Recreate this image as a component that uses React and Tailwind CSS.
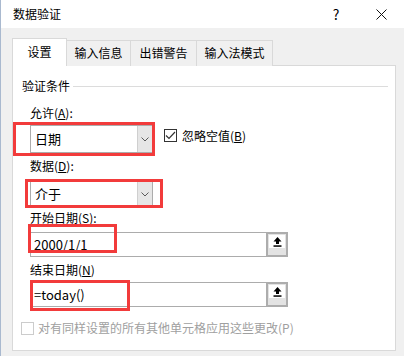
const FONT = "font-['Noto_Sans_CJK_SC','Noto_Sans',sans-serif]";

function Chevron() {
  return (
    <svg width="8" height="5" viewBox="0 0 8 5" fill="none" aria-hidden="true">
      <path d="M0.5 0.5 L4 4 L7.5 0.5" stroke="#5a5a5a" strokeWidth="1" />
    </svg>
  );
}

function Select({ value, children }) {
  return (
    <div className="relative flex h-[28px] w-[123px] border border-[#acacac] bg-white">
      <div className="flex flex-1 items-center pl-[4px] text-[13px]">{value}</div>
      <div className="flex w-[15px] items-center justify-center border-l border-[#cfcfcf] bg-[#e6e6e6]">
        <Chevron />
      </div>
      {children}
    </div>
  );
}

function RefButton() {
  return (
    <div className="flex h-[25px] w-[22px] flex-col border-2 border-[#adadad] bg-[#e3e3e3] p-px">
      <div className="flex h-[13px] items-center justify-center bg-white">
        <svg width="9" height="10" viewBox="0 0 9 10" aria-hidden="true">
          <path d="M4.5 0 L8.5 4.5 L6 4.5 L6 7 L3 7 L3 4.5 L0.5 4.5 Z" fill="#000" />
          <rect x="0.5" y="8.3" width="8" height="1.5" fill="#000" />
        </svg>
      </div>
    </div>
  );
}

function RefInput({ value, children }) {
  return (
    <div className="relative flex h-[25px] w-[258px]">
      <div className="flex flex-1 items-center border border-r-0 border-[#acacac] bg-white pl-[3px] text-[13px]">{value}</div>
      <RefButton />
      {children}
    </div>
  );
}

function Mark({ className }) {
  return <div className={`pointer-events-none absolute border-[3px] border-[#f23b3b] ${className}`} />;
}

export default function App() {
  const tabs = [
    { label: "输入信息", w: "w-[64px]" },
    { label: "出错警告", w: "w-[66px]" },
    { label: "输入法模式", w: "w-[76px]" },
  ];

  return (
    <div className={`h-[356px] w-[404px] overflow-hidden border-l border-[#a9b9cf] bg-[#f0f0f0] text-[12px] leading-[14px] text-black ${FONT}`}>
      <div className="flex h-[28px] items-center bg-white pl-[12px]">
        <span>数据验证</span>
        <div className="ml-auto flex h-full">
          <div className="flex w-[46px] items-center justify-center text-[14px]">?</div>
          <div className="flex w-[45px] items-center justify-center">
            <svg width="11" height="11" viewBox="0 0 11 11" aria-hidden="true">
              <path d="M0.5 0.5 L10.5 10.5 M10.5 0.5 L0.5 10.5" stroke="#111" strokeWidth="1" />
            </svg>
          </div>
        </div>
      </div>

      <div className="ml-[11px] mt-[10px] flex h-[28px] items-end">
        <div className="relative z-10 flex h-[28px] w-[55px] items-center justify-center border border-b-0 border-[#d9d9d9] bg-white pb-[2px]">
          设置
        </div>
        {tabs.map((t) => (
          <div
            key={t.label}
            className={`flex h-[26px] ${t.w} items-center justify-center border-r border-t border-[#d9d9d9] bg-[#f0f0f0] pb-px`}
          >
            {t.label}
          </div>
        ))}
      </div>

      <div className="-mt-px ml-[11px] h-[286px] w-[384px] border border-[#d9d9d9] bg-white">
        <div className="mt-[13px] flex items-center pl-[9px] pr-[7px]">
          <span>验证条件</span>
          <div className="ml-[3px] h-px flex-1 bg-[#dcdcdc]" />
        </div>

        <div className="pl-[17px]">
          <div className="mt-[13px]">
            允许(<u>A</u>):
          </div>
          <div className="mt-[5px] flex">
            <Select value="日期">
              <Mark className="-left-[18px] -top-[4px] -right-[3px] -bottom-[4px]" />
            </Select>
            <div className="ml-[11px] mt-[4px] flex h-[13px] items-center">
              <div className="flex h-[13px] w-[13px] items-center justify-center border border-[#333] bg-white">
                <svg width="11" height="9" viewBox="0 0 11 9" fill="none" aria-hidden="true">
                  <path d="M1 4.5 L4 7.5 L10 1" stroke="#333" strokeWidth="1.2" />
                </svg>
              </div>
              <span className="ml-[5px]">
                忽略空值(<u>B</u>)
              </span>
            </div>
          </div>

          <div className="mt-[6px]">
            数据(<u>D</u>):
          </div>
          <div className="mt-[7px]">
            <Select value="介于">
              <Mark className="-left-[6px] -top-[2px] -right-[11px] -bottom-[1px]" />
            </Select>
          </div>

          <div className="mt-[3px]">
            开始日期(<u>S</u>):
          </div>
          <div className="mt-[7px]">
            <RefInput value="2000/1/1">
              <Mark className="-left-[2px] -top-[8px] h-[29px] w-[89px]" />
            </RefInput>
          </div>

          <div className="mt-[6px]">
            结束日期(<u>N</u>)
          </div>
          <div className="mt-[5px]">
            <RefInput value="=today()">
              <Mark className="left-0 -top-[2px] h-[31px] w-[100px]" />
            </RefInput>
          </div>
        </div>

        <div className="mt-[14px] flex items-center pl-[8px] text-[#a0a0a0]">
          <div className="h-[13px] w-[13px] border border-[#cccccc] bg-white" />
          <span className="ml-[4px]">对有同样设置的所有其他单元格应用这些更改(P)</span>
        </div>
      </div>
    </div>
  );
}
